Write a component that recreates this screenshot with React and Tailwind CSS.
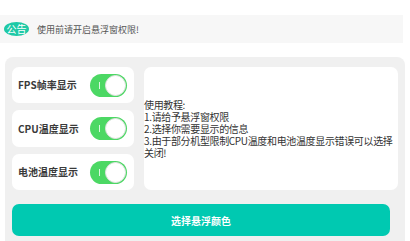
import { useState } from "react";

const font = { fontFamily: '"Noto Sans CJK SC", "Noto Sans", sans-serif' };

function Toggle({ on, onChange }) {
  return (
    <button
      onClick={onChange}
      className={`relative w-[37px] h-[23px] rounded-full shrink-0 ${on ? "bg-[#4cd864]" : "bg-[#d8d8d8]"}`}
    >
      <span className="absolute left-[9px] top-[8px] w-[1px] h-[7px] bg-white/80" />
      <span
        className={`absolute top-[1px] w-[21px] h-[21px] rounded-full bg-white border border-[#e2e2e2] ${on ? "right-[1px]" : "left-[1px]"}`}
      />
    </button>
  );
}

function SwitchCard({ label, on, onChange, className }) {
  return (
    <div className={`bg-white rounded-[7px] flex items-center justify-between pl-[6px] pr-[7px] ${className}`}>
      <span className="text-[10px] font-bold text-[#3a3a3a] leading-none">{label}</span>
      <Toggle on={on} onChange={onChange} />
    </div>
  );
}

const lines = [
  "使用教程:",
  "1.请给予悬浮窗权限",
  "2.选择你需要显示的信息",
  "3.由于部分机型限制CPU温度和电池温度显示错误可以选择",
  "关闭!",
];

export default function App() {
  const [fps, setFps] = useState(true);
  const [cpu, setCpu] = useState(true);
  const [bat, setBat] = useState(true);

  return (
    <div className="w-[410px] h-[241px] bg-white overflow-hidden flex flex-col pt-[15px]" style={font}>
      <div className="h-[28px] mr-[7px] bg-[#f7f7f7] flex items-center pl-[4px]">
        <span className="w-[25px] h-[14px] rounded-[50%] bg-[#1fc9a6] text-white text-[10px] leading-none flex items-center justify-center">
          公告
        </span>
        <span className="ml-[8px] text-[9px] text-[#555] leading-none">使用前请开启悬浮窗权限!</span>
      </div>

      <div className="mt-[14px] mx-[5px] flex-1 bg-[#f0f0f0] rounded-t-[8px] px-[7px] pt-[10px]">
        <div className="flex h-[123px]">
          <div className="w-[122px] flex flex-col">
            <SwitchCard label="FPS帧率显示" on={fps} onChange={() => setFps(!fps)} className="h-[36px]" />
            <SwitchCard label="CPU温度显示" on={cpu} onChange={() => setCpu(!cpu)} className="h-[37px] mt-[7px]" />
            <SwitchCard label="电池温度显示" on={bat} onChange={() => setBat(!bat)} className="h-[36px] mt-[7px]" />
          </div>
          <div className="ml-[10px] flex-1 bg-white rounded-[7px] flex flex-col justify-center">
            {lines.map((l) => (
              <div key={l} className="text-[10px] leading-[12px] text-[#333] whitespace-nowrap tracking-[-0.35px]">
                {l}
              </div>
            ))}
          </div>
        </div>
        <button className="mt-[14px] w-[378px] h-[32px] rounded-[7px] bg-[#00c9b1] text-white text-[10px] font-bold flex items-center justify-center">
          选择悬浮颜色
        </button>
      </div>
    </div>
  );
}
